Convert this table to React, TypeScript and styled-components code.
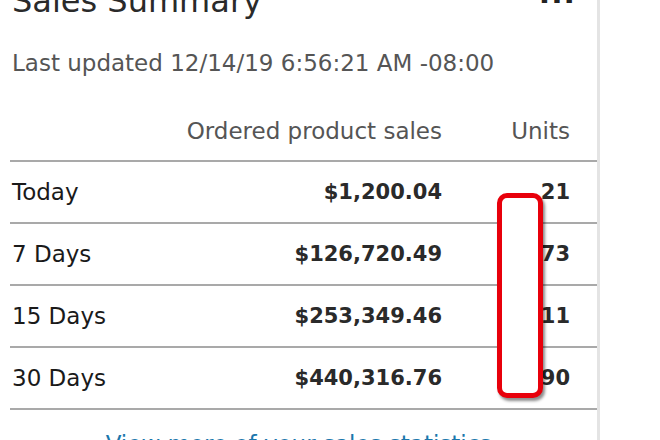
import * as React from "react";
import styled, { createGlobalStyle } from "styled-components";

const GlobalStyle = createGlobalStyle`
  html, body {
    margin: 0;
    padding: 0;
    background: #ffffff;
    overflow: hidden;
  }
  body {
    font-family: "DejaVu Sans", "Noto Sans", sans-serif;
  }
`;

const Page = styled.div`
  position: relative;
  width: 660px;
  height: 440px;
  overflow: hidden;
`;

const Card = styled.div`
  width: 600px;
  border-right: 3px solid #e4e4e4;
  box-sizing: border-box;
  padding-left: 10px;
  height: 480px;
`;

const TitleRow = styled.div`
  display: flex;
  justify-content: space-between;
  align-items: flex-start;
  margin-top: -17px;
  padding: 0 21px 0 2px;
`;

const Title = styled.h2`
  margin: 0;
  font-size: 32px;
  line-height: 36px;
  font-weight: 400;
  color: #2a2a2a;
`;

const More = styled.span`
  margin-top: 0;
  font-size: 30px;
  line-height: 20px;
  font-weight: 700;
  letter-spacing: 1px;
  color: #222;
`;

const Updated = styled.div`
  margin-top: 29px;
  padding-left: 2px;
  font-size: 23px;
  line-height: 30px;
  color: #555;
`;

const Row = styled.div<{ $head?: boolean }>`
  display: grid;
  grid-template-columns: 1fr auto 128px;
  align-items: center;
  height: ${(p) => (p.$head ? "59px" : "60px")};
  margin-top: ${(p) => (p.$head ? "23px" : "0")};
  border-bottom: 2px solid #a9a9a9;
  padding-right: 27px;
  font-size: 23px;
  color: ${(p) => (p.$head ? "#555" : "#1a1a1a")};
`;

const Label = styled.span`
  padding-left: 2px;
`;

const Num = styled.span<{ $bold?: boolean }>`
  text-align: right;
  font-size: ${(p) => (p.$bold ? "21px" : "inherit")};
  font-weight: ${(p) => (p.$bold ? 700 : 400)};
  color: ${(p) => (p.$bold ? "#2a2a2a" : "inherit")};
`;

const LinkRow = styled.div`
  text-align: center;
  padding-top: 21px;
  padding-right: 10px;
  font-size: 23px;
  color: #1b77ac;
`;

const Redact = styled.div`
  position: absolute;
  left: 497px;
  top: 193px;
  width: 46px;
  height: 205px;
  box-sizing: border-box;
  border: 5px solid #e8000b;
  border-radius: 10px;
  background: #fff;
  box-shadow: 2px 3px 3px rgba(0, 0, 0, 0.45);
`;

const rows = [
  ["Today", "$1,200.04", "21"],
  ["7 Days", "$126,720.49", "73"],
  ["15 Days", "$253,349.46", "11"],
  ["30 Days", "$440,316.76", "90"],
];

export default function App() {
  return (
    <Page>
      <GlobalStyle />
      <Card>
        <TitleRow>
          <Title>Sales Summary</Title>
          <More>...</More>
        </TitleRow>
        <Updated>Last updated 12/14/19 6:56:21 AM -08:00</Updated>
        <Row $head>
          <Label />
          <Num>Ordered product sales</Num>
          <Num>Units</Num>
        </Row>
        {rows.map((r) => (
          <Row key={r[0]}>
            <Label>{r[0]}</Label>
            <Num $bold>{r[1]}</Num>
            <Num $bold>{r[2]}</Num>
          </Row>
        ))}
        <LinkRow>View more of your sales statistics</LinkRow>
      </Card>
      <Redact />
    </Page>
  );
}
